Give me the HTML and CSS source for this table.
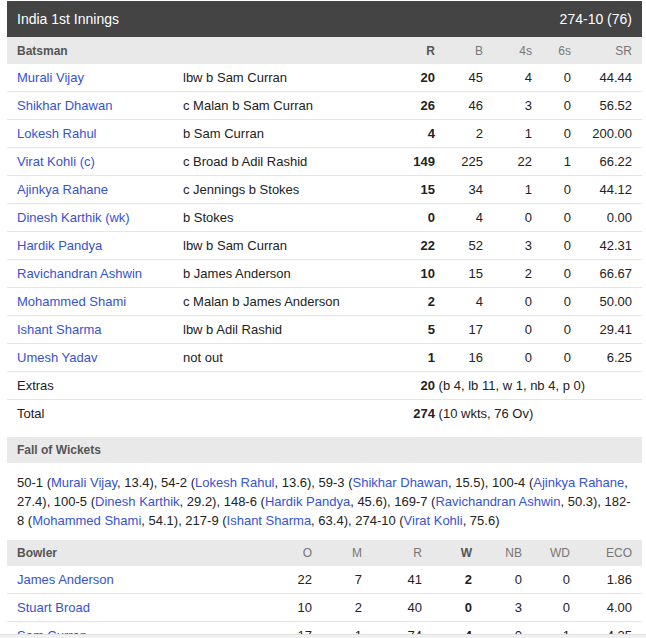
FILE: index.html
```html
<!DOCTYPE html>
<html lang="en">
<head>
<meta charset="utf-8">
<title>India 1st Innings</title>
<link rel="stylesheet" href="styles.css">
</head>
<body>
<div class="card">
  <div class="title">
    <span>India 1st Innings</span>
    <span>274-10 (76)</span>
  </div>

  <div class="bat row head">
    <div class="c lab">Batsman</div>
    <div class="c"></div>
    <div class="c num key">R</div>
    <div class="c num">B</div>
    <div class="c num">4s</div>
    <div class="c num">6s</div>
    <div class="c num">SR</div>
  </div>

  <div class="bat row"><a class="c link">Murali Vijay</a><div class="c">lbw b Sam Curran</div><div class="c num b">20</div><div class="c num">45</div><div class="c num">4</div><div class="c num">0</div><div class="c num">44.44</div></div>
  <div class="bat row"><a class="c link">Shikhar Dhawan</a><div class="c">c Malan b Sam Curran</div><div class="c num b">26</div><div class="c num">46</div><div class="c num">3</div><div class="c num">0</div><div class="c num">56.52</div></div>
  <div class="bat row"><a class="c link">Lokesh Rahul</a><div class="c">b Sam Curran</div><div class="c num b">4</div><div class="c num">2</div><div class="c num">1</div><div class="c num">0</div><div class="c num">200.00</div></div>
  <div class="bat row"><a class="c link">Virat Kohli (c)</a><div class="c">c Broad b Adil Rashid</div><div class="c num b">149</div><div class="c num">225</div><div class="c num">22</div><div class="c num">1</div><div class="c num">66.22</div></div>
  <div class="bat row"><a class="c link">Ajinkya Rahane</a><div class="c">c Jennings b Stokes</div><div class="c num b">15</div><div class="c num">34</div><div class="c num">1</div><div class="c num">0</div><div class="c num">44.12</div></div>
  <div class="bat row"><a class="c link">Dinesh Karthik (wk)</a><div class="c">b Stokes</div><div class="c num b">0</div><div class="c num">4</div><div class="c num">0</div><div class="c num">0</div><div class="c num">0.00</div></div>
  <div class="bat row"><a class="c link">Hardik Pandya</a><div class="c">lbw b Sam Curran</div><div class="c num b">22</div><div class="c num">52</div><div class="c num">3</div><div class="c num">0</div><div class="c num">42.31</div></div>
  <div class="bat row"><a class="c link">Ravichandran Ashwin</a><div class="c">b James Anderson</div><div class="c num b">10</div><div class="c num">15</div><div class="c num">2</div><div class="c num">0</div><div class="c num">66.67</div></div>
  <div class="bat row"><a class="c link">Mohammed Shami</a><div class="c">c Malan b James Anderson</div><div class="c num b">2</div><div class="c num">4</div><div class="c num">0</div><div class="c num">0</div><div class="c num">50.00</div></div>
  <div class="bat row"><a class="c link">Ishant Sharma</a><div class="c">lbw b Adil Rashid</div><div class="c num b">5</div><div class="c num">17</div><div class="c num">0</div><div class="c num">0</div><div class="c num">29.41</div></div>
  <div class="bat row"><a class="c link">Umesh Yadav</a><div class="c">not out</div><div class="c num b">1</div><div class="c num">16</div><div class="c num">0</div><div class="c num">0</div><div class="c num">6.25</div></div>

  <div class="bat row"><div class="c">Extras</div><div class="c"></div><div class="c span"><b class="tot">20</b> (b 4, lb 11, w 1, nb 4, p 0)</div></div>
  <div class="bat row last"><div class="c">Total</div><div class="c"></div><div class="c span"><b class="tot">274</b> (10 wkts, 76 Ov)</div></div>

  <div class="section">Fall of Wickets</div>
  <p class="fow">50-1 (<a class="link">Murali Vijay</a>, 13.4), 54-2 (<a class="link">Lokesh Rahul</a>, 13.6), 59-3 (<a class="link">Shikhar Dhawan</a>, 15.5), 100-4 (<a class="link">Ajinkya Rahane</a>, 27.4), 100-5 (<a class="link">Dinesh Karthik</a>, 29.2), 148-6 (<a class="link">Hardik Pandya</a>, 45.6), 169-7 (<a class="link">Ravichandran Ashwin</a>, 50.3), 182-8 (<a class="link">Mohammed Shami</a>, 54.1), 217-9 (<a class="link">Ishant Sharma</a>, 63.4), 274-10 (<a class="link">Virat Kohli</a>, 75.6)</p>

  <div class="bowl row head">
    <div class="c lab">Bowler</div>
    <div class="c num">O</div>
    <div class="c num">M</div>
    <div class="c num">R</div>
    <div class="c num key">W</div>
    <div class="c num">NB</div>
    <div class="c num">WD</div>
    <div class="c num">ECO</div>
  </div>
  <div class="bowl row"><a class="c link">James Anderson</a><div class="c num">22</div><div class="c num">7</div><div class="c num">41</div><div class="c num b">2</div><div class="c num">0</div><div class="c num">0</div><div class="c num">1.86</div></div>
  <div class="bowl row"><a class="c link">Stuart Broad</a><div class="c num">10</div><div class="c num">2</div><div class="c num">40</div><div class="c num b">0</div><div class="c num">3</div><div class="c num">0</div><div class="c num">4.00</div></div>
  <div class="bowl row"><a class="c link">Sam Curran</a><div class="c num">17</div><div class="c num">1</div><div class="c num">74</div><div class="c num b">4</div><div class="c num">0</div><div class="c num">1</div><div class="c num">4.35</div></div>
</div>
<div class="hbar"></div>
</body>
</html>
```

FILE: styles.css
```css
html, body {
  background: #fff;
}
body {
  margin: 1px 4px 0 7px;
  font-family: "Liberation Sans", Arial, sans-serif;
  font-size: 13px;
  color: #222;
  overflow: hidden;
}
.card {
  display: flex;
  flex-direction: column;
}
.title {
  display: flex;
  justify-content: space-between;
  align-items: center;
  height: 36px;
  padding: 0 10px;
  background: #444;
  color: #fff;
  font-size: 14px;
}
.row {
  display: grid;
  align-items: center;
  height: 27px;
  border-bottom: 1px solid #e6e6e6;
}
.bat {
  grid-template-columns: 166px 222px 50px 48px 49px 39px 61px;
}
.bowl {
  grid-template-columns: 255px 60px 50px 60px 50px 50px 48px 62px;
}
.row.head {
  background: #e9e9e9;
  border-bottom: none;
  font-size: 12px;
  color: #777;
}
.bat.head {
  height: 27px;
}
.bowl.head {
  height: 26px;
}
.row.last {
  border-bottom: none;
}
.c {
  padding: 0 10px;
  white-space: nowrap;
}
.num {
  text-align: right;
}
.b {
  font-weight: bold;
}
.lab {
  font-weight: bold;
  color: #555;
}
.key {
  font-weight: bold;
  color: #555;
}
.link {
  color: #3652d8;
  text-decoration: none;
  cursor: pointer;
}
.span {
  grid-column: 3 / -1;
}
.tot {
  display: inline-block;
  width: 30px;
  text-align: right;
}
.section {
  margin-top: 10px;
  height: 26px;
  line-height: 26px;
  padding: 0 10px;
  background: #e9e9e9;
  font-size: 12px;
  font-weight: bold;
  color: #555;
}
.fow {
  margin: 0;
  padding: 10px 10px;
  line-height: 19px;
}
.hbar {
  position: fixed;
  left: 0;
  right: 0;
  bottom: 0;
  height: 3px;
  background: #f1f1f1;
  border-top: 1px solid #e2e2e2;
}
```
